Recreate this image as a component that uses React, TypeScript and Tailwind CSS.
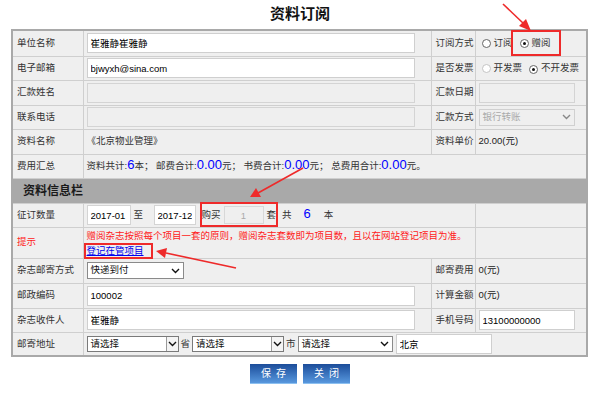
import React from 'react'

const font = "font-['Liberation_Sans','Noto_Sans_CJK_SC',sans-serif]"

function Box({ value = '', className = '', disabled = false }: { value?: string; className?: string; disabled?: boolean }) {
  return (
    <input
      readOnly
      value={value}
      className={
        'h-[20px] border px-[3px] outline-none ' +
        (disabled ? 'bg-[#efefef] border-[#d4d4d4] text-[#999] ' : 'bg-white border-[#cfcfcf] text-black ') +
        className
      }
    />
  )
}

function Chevron({ color = '#111' }: { color?: string }) {
  return (
    <svg width="9" height="6" viewBox="0 0 9 6">
      <polyline points="1,1 4.5,4.5 8,1" fill="none" stroke={color} strokeWidth="1.4" />
    </svg>
  )
}

function Radio({ checked = false, disabled = false }: { checked?: boolean; disabled?: boolean }) {
  return (
    <span
      className={
        'inline-flex w-[9px] h-[9px] rounded-full border items-center justify-center bg-white ' +
        (disabled ? 'border-[#c4c4c4]' : 'border-[#666]')
      }
    >
      {checked && <span className="w-[3px] h-[3px] rounded-full bg-[#111]" />}
    </span>
  )
}

function Label({ children, className = '' }: { children: React.ReactNode; className?: string }) {
  return <td className={'border border-[#cfcfcf] pl-[4px] text-[#333] ' + className}>{children}</td>
}

function Cell({ children, colSpan, className = '' }: { children?: React.ReactNode; colSpan?: number; className?: string }) {
  return (
    <td colSpan={colSpan} className={'border border-[#cfcfcf] pl-[3px] ' + className}>
      {children}
    </td>
  )
}

function Blue({ children }: { children: React.ReactNode }) {
  return <span className="text-[#0000ff] text-[13px] leading-none">{children}</span>
}

export default function App() {
  return (
    <div className={'relative w-[600px] h-[397px] bg-white text-[9.5px] ' + font}>
      <div className="h-[29px] flex items-center justify-center text-[15px] font-bold text-[#111]">资料订阅</div>

      <table className="ml-[11px] w-[575px] table-fixed border-collapse border-2 border-[#a9a9a9] bg-[#efefef]">
        <colgroup>
          <col className="w-[71px]" />
          <col className="w-[348px]" />
          <col className="w-[44px]" />
          <col className="w-[112px]" />
        </colgroup>
        <tbody>
          <tr className="h-[26px]">
            <Label>单位名称</Label>
            <Cell><Box value="崔雅静崔雅静" className="w-[328px] block" /></Cell>
            <Label className="pl-[3px]">订阅方式</Label>
            <Cell>
              <div className="flex items-center gap-[3px] pl-[3px]">
                <Radio />
                <span className="text-[#333]">订阅</span>
                <span className="relative ml-[4px] inline-flex items-center gap-[3px]">
                  <Radio checked />
                  <span className="text-[#333]">赠阅</span>
                  <span className="absolute -left-[9px] -right-[10px] -top-[6px] -bottom-[6px] border-2 border-[#ee2a2a]" />
                </span>
              </div>
            </Cell>
          </tr>
          <tr className="h-[24px]">
            <Label>电子邮箱</Label>
            <Cell><Box value="bjwyxh@sina.com" className="w-[328px] block" /></Cell>
            <Label className="pl-[3px]">是否发票</Label>
            <Cell>
              <div className="flex items-center gap-[3px] pl-[3px]">
                <Radio disabled />
                <span className="text-[#333]">开发票</span>
                <span className="ml-[4px]"><Radio checked /></span>
                <span className="text-[#333]">不开发票</span>
              </div>
            </Cell>
          </tr>
          <tr className="h-[25px]">
            <Label>汇款姓名</Label>
            <Cell><Box disabled className="w-[328px] block" /></Cell>
            <Label className="pl-[3px]">汇款日期</Label>
            <Cell><Box disabled className="w-[96px] block" /></Cell>
          </tr>
          <tr className="h-[24px]">
            <Label>联系电话</Label>
            <Cell><Box disabled className="w-[328px] block" /></Cell>
            <Label className="pl-[3px]">汇款方式</Label>
            <Cell>
              <div className="w-[96px] h-[17px] border border-[#d0d0d0] bg-[#efefef] flex items-center justify-between px-[3px] text-[#aaa]">
                <span>银行转账</span>
                <Chevron color="#888" />
              </div>
            </Cell>
          </tr>
          <tr className="h-[25px]">
            <Label>资料名称</Label>
            <Cell className="text-[#333]">《北京物业管理》</Cell>
            <Label className="pl-[3px]">资料单价</Label>
            <Cell className="text-[#222]">20.00(元)</Cell>
          </tr>
          <tr className="h-[24px]">
            <Label>费用汇总</Label>
            <Cell colSpan={3} className="text-[#333]">
              资料共计:<Blue>6</Blue>本； 邮费合计:<Blue>0.00</Blue>元； 书费合计:<Blue>0.00</Blue>元； 总费用合计:<Blue>0.00</Blue>元。
            </Cell>
          </tr>
          <tr className="h-[25px] bg-[#a9a9a9]">
            <td colSpan={4} className="pl-[10px] text-[12px] font-bold text-[#1a1a1a]">资料信息栏</td>
          </tr>
          <tr className="h-[24px]">
            <Label>征订数量</Label>
            <Cell colSpan={2}>
              <div className="flex items-center text-[#333]">
                <Box value="2017-01" className="w-[44px] h-[18px] border-[#d4d4d4] px-[2px]" />
                <span className="ml-[3px] w-[20px]">至</span>
                <Box value="2017-12" className="w-[42px] h-[18px] border-[#d4d4d4] px-[2px]" />
                <span className="relative ml-[6px] inline-flex items-center">
                  <span>购买</span>
                  <input readOnly value="1" className="w-[40px] h-[18px] ml-[3px] border border-[#d8d8d8] bg-[#efefef] text-center text-[#aaa] outline-none" />
                  <span className="ml-[3px]">套</span>
                  <span className="absolute -left-[2px] -right-[2px] -top-[4px] -bottom-[3px] border-2 border-[#ee2a2a]" />
                </span>
                <span className="ml-[6px]">共</span>
                <span className="ml-[12px]"><Blue>6</Blue></span>
                <span className="ml-[13px]">本</span>
              </div>
            </Cell>
            <Cell />
          </tr>
          <tr className="h-[30px]">
            <Label className="text-[#ff2020]">提示</Label>
            <Cell colSpan={2}>
              <div className="text-[#ff1a1a] leading-[14px] pt-[1px]">赠阅杂志按照每个项目一套的原则，赠阅杂志套数即为项目数，且以在网站登记项目为准。</div>
              <div className="leading-[15px]">
                <span className="relative">
                  <span className="text-[#0000ee] underline">登记在管项目</span>
                  <span className="absolute -left-[3px] -right-[9px] -top-[2px] -bottom-[3px] border-2 border-[#ee2a2a]" />
                </span>
              </div>
            </Cell>
            <Cell />
          </tr>
          <tr className="h-[25px]">
            <Label>杂志邮寄方式</Label>
            <Cell>
              <div className="w-[97px] h-[17px] border border-[#8a8a8a] bg-white flex items-center justify-between px-[3px] text-[#111]">
                <span>快递到付</span>
                <Chevron />
              </div>
            </Cell>
            <Label className="pl-[3px]">邮寄费用</Label>
            <Cell className="text-[#222]">0(元)</Cell>
          </tr>
          <tr className="h-[25px]">
            <Label>邮政编码</Label>
            <Cell><Box value="100002" className="w-[328px] block" /></Cell>
            <Label className="pl-[3px]">计算金额</Label>
            <Cell className="text-[#222]">0(元)</Cell>
          </tr>
          <tr className="h-[24px]">
            <Label>杂志收件人</Label>
            <Cell><Box value="崔雅静" className="w-[328px] block" /></Cell>
            <Label className="pl-[3px]">手机号码</Label>
            <Cell><Box value="13100000000" className="w-[96px] block" /></Cell>
          </tr>
          <tr className="h-[24px]">
            <Label>邮寄地址</Label>
            <Cell colSpan={3}>
              <div className="flex items-center text-[#111]">
                <div className="w-[92px] h-[16px] border border-[#7a7a7a] bg-white flex items-center justify-between pl-[3px]">
                  <span>请选择</span>
                  <span className="w-[12px] h-full border-l border-[#9a9a9a] bg-[#f4f4f4] flex items-center justify-center"><Chevron /></span>
                </div>
                <span className="mx-[2px] text-[#333]">省</span>
                <div className="w-[92px] h-[16px] border border-[#7a7a7a] bg-white flex items-center justify-between pl-[3px]">
                  <span>请选择</span>
                  <span className="w-[12px] h-full border-l border-[#9a9a9a] bg-[#f4f4f4] flex items-center justify-center"><Chevron /></span>
                </div>
                <span className="mx-[2px] text-[#333]">市</span>
                <div className="w-[95px] h-[16px] border border-[#8a8a8a] bg-white flex items-center justify-between px-[3px]">
                  <span>请选择</span>
                  <Chevron />
                </div>
                <Box value="北京" className="ml-[3px] w-[96px] h-[19px]" />
              </div>
            </Cell>
          </tr>
        </tbody>
      </table>

      <div className="mt-[7px] flex justify-center gap-[6px]">
        <button className="w-[47px] h-[20px] bg-linear-to-b from-[#1c4d9a] to-[#5898de] border-b border-[#8cc0f0] text-white text-[10px] tracking-[5px] pl-[5px]">保存</button>
        <button className="w-[47px] h-[20px] bg-linear-to-b from-[#1c4d9a] to-[#5898de] border-b border-[#8cc0f0] text-white text-[10px] tracking-[5px] pl-[5px]">关闭</button>
      </div>

      <svg className="absolute inset-0 pointer-events-none" width="600" height="397" viewBox="0 0 600 397">
        <g stroke="#ee2a2a" strokeWidth="1.6" fill="#ee2a2a">
          <line x1="503" y1="4" x2="524" y2="24" />
          <polygon points="531,31 519,26 526,19" stroke="none" />
          <line x1="303" y1="168" x2="258" y2="193" />
          <polygon points="250,197 256,188 261,197" stroke="none" />
          <line x1="236" y1="268" x2="166" y2="253" />
          <polygon points="156,251 167,248 165,258" stroke="none" />
        </g>
      </svg>
    </div>
  )
}
